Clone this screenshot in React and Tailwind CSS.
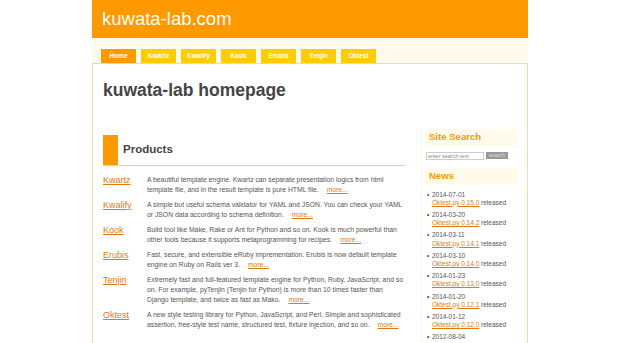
import React from 'react'

const tabs = ['Home', 'Kwartz', 'Kwalify', 'Kook', 'Erubis', 'Tenjin', 'Oktest']

const products = [
  {
    name: 'Kwartz',
    desc: 'A beautiful template engine. Kwartz can separate presentation logics from html template file, and in the result template is pure HTML file.',
  },
  {
    name: 'Kwalify',
    desc: 'A simple but useful schema validator for YAML and JSON. You can check your YAML or JSON data according to schema definition.',
  },
  {
    name: 'Kook',
    desc: 'Build tool like Make, Rake or Ant for Python and so on. Kook is much powerful than other tools because it supports metaprogramming for recipes.',
  },
  {
    name: 'Erubis',
    desc: 'Fast, secure, and extensible eRuby imprementation. Erubis is now default template engine on Ruby on Rails ver 3.',
  },
  {
    name: 'Tenjin',
    desc: 'Extremely fast and full-featured template engine for Python, Ruby, JavaScript, and so on. For example, pyTenjin (Tenjin for Python) is more than 10 times faster than Django template, and twice as fast as Mako.',
  },
  {
    name: 'Oktest',
    desc: 'A new style testing library for Python, JavaScript, and Perl. Simple and sophisticated assertion, free-style test name, structured test, fixture injection, and so on.',
  },
]

const news = [
  ['2014-07-01', 'Oktest.py 0.15.0'],
  ['2014-03-20', 'Oktest.py 0.14.2'],
  ['2014-03-11', 'Oktest.py 0.14.1'],
  ['2014-03-10', 'Oktest.py 0.14.0'],
  ['2014-01-23', 'Oktest.py 0.13.0'],
  ['2014-01-20', 'Oktest.py 0.12.1'],
  ['2014-01-12', 'Oktest.py 0.12.0'],
  ['2012-08-04', 'Oktest.py 0.11.2'],
]

export default function App() {
  return (
    <div className="h-[343px] overflow-hidden bg-white font-['Liberation_Sans',Arial,sans-serif]">
      <div className="w-[436px] ml-[92px]">
        {/* header */}
        <div className="h-[38px] bg-[#ff9900] pl-[10px] flex items-center">
          <span className="text-[18.5px] text-white leading-none">kuwata-lab.com</span>
        </div>
        <div className="bg-[#fffbec] h-[25px] pl-[9px] flex items-end gap-[5px]">
          {tabs.map((t, i) => (
            <div
              key={t}
              className={
                'w-[35px] h-[14px] flex items-center justify-center text-[6.5px] font-bold text-white ' +
                (i === 0 ? 'bg-[#ff9900]' : 'bg-[#ffcc00]')
              }
            >
              {t}
            </div>
          ))}
        </div>

        {/* content box */}
        <div className="border-x border-t border-[#ffd899] h-[300px] bg-white px-[10px]">
          <h1 className="text-[17.5px] font-bold text-[#444] leading-none mt-[18px]">kuwata-lab homepage</h1>

          <div className="flex mt-[35px]">
            {/* main */}
            <div className="w-[305px]">
              <div className="flex h-[31px] border-b border-[#ffcc77]">
                <div className="w-[15px] bg-[#ff9900]"></div>
                <div className="pl-[5px] flex items-center text-[11.5px] font-bold text-[#444]">Products</div>
              </div>
              <div className="mt-[9px] flex flex-col gap-[5px]">
                {products.map((p) => (
                  <div key={p.name} className="flex">
                    <a className="w-[44px] shrink-0 text-[9px] leading-[10px] text-[#e07a10] underline">{p.name}</a>
                    <p className="text-[6.8px] leading-[10px] text-[#555]">
                      {p.desc}
                      <a className="ml-[8px] text-[#e07a10] underline">more...</a>
                    </p>
                  </div>
                ))}
              </div>
            </div>

            {/* sidebar */}
            <div className="ml-[16px] w-[97px] border-l border-[#fff6e6] pl-[3px] -mt-[6px]">
              <div className="bg-[#fffbea] h-[17px] flex items-center pl-[4px] text-[9.6px] font-bold text-[#ff9900]">
                Site Search
              </div>
              <div className="flex items-center gap-[2px] mt-[6px] pl-[1px]">
                <div className="w-[58px] h-[8px] border border-[#ccc] text-[5.5px] leading-[6px] text-[#888] pl-[1px]">enter search text</div>
                <div className="w-[22px] h-[7px] bg-[#999] text-[5.5px] leading-[7px] text-[#ddd] text-center">search</div>
              </div>
              <div className="bg-[#fffbea] h-[17px] flex items-center pl-[4px] text-[9.6px] font-bold text-[#ff9900] mt-[8px]">
                News
              </div>
              <ul className="mt-[6px] pl-[2px] flex flex-col gap-[4px]">
                {news.map(([d, l]) => (
                  <li key={d} className="flex text-[6.5px] leading-[8.2px]">
                    <span className="w-[5px] text-[#444]">•</span>
                    <div>
                      <div className="text-[#555]">{d}</div>
                      <div className="text-[#555]">
                        <a className="text-[#e07a10] underline">{l}</a> released
                      </div>
                    </div>
                  </li>
                ))}
              </ul>
            </div>
          </div>
        </div>
      </div>
    </div>
  )
}
